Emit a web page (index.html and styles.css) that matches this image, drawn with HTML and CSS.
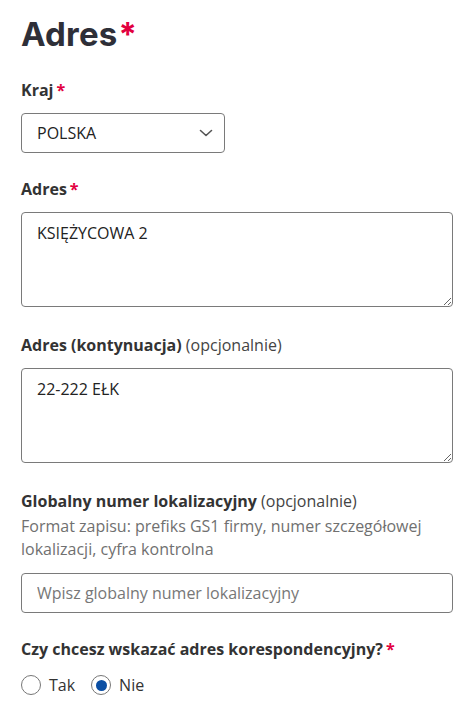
FILE: index.html
```html
<!DOCTYPE html>
<html lang="pl">
<head>
<meta charset="utf-8">
<link rel="stylesheet" href="styles.css">
</head>
<body>
<main class="form">
  <h1 class="title">Adres<span class="req">*</span></h1>

  <div class="field">
    <div class="label">Kraj<span class="req">*</span></div>
    <div class="select">
      <span>POLSKA</span>
      <svg class="chev" width="14" height="8" viewBox="0 0 14 8"><path d="M1.5 1.5 L7 6.5 L12.5 1.5" fill="none" stroke="#555" stroke-width="1.6" stroke-linecap="round" stroke-linejoin="round"/></svg>
    </div>
  </div>

  <div class="field field-area">
    <div class="label">Adres<span class="req">*</span></div>
    <textarea class="area" readonly>KSIĘŻYCOWA 2</textarea>
  </div>

  <div class="field field-area">
    <div class="label">Adres (kontynuacja) <span class="opt">(opcjonalnie)</span></div>
    <textarea class="area" readonly>22-222 EŁK</textarea>
  </div>

  <div class="field">
    <div class="label label-hinted">Globalny numer lokalizacyjny <span class="opt">(opcjonalnie)</span></div>
    <div class="hint">Format zapisu: prefiks GS1 firmy, numer szczegółowej lokalizacji, cyfra kontrolna</div>
    <input class="input" type="text" placeholder="Wpisz globalny numer lokalizacyjny">
  </div>

  <div class="field">
    <div class="label">Czy chcesz wskazać adres korespondencyjny?<span class="req">*</span></div>
    <div class="radios">
      <label class="radio"><span class="dot"></span>Tak</label>
      <label class="radio"><span class="dot on"></span>Nie</label>
    </div>
  </div>
</main>
</body>
</html>
```

FILE: styles.css
```css
* { box-sizing: border-box; }
html, body { margin: 0; padding: 0; background: #fff; }
body {
  font-family: "Open Sans", "Liberation Sans", sans-serif;
  font-size: 16px;
  line-height: 24px;
  color: #222;
}
.form {
  padding: 14px 21px 0 21px;
}
.title {
  font-family: "Inter", "Liberation Sans", sans-serif;
  font-weight: 700;
  font-size: 33px;
  line-height: 40px;
  margin: 0 0 24px 0;
  color: #2e2f38;
  letter-spacing: 0.2px;
}
.title .req { margin-left: 1px; }
.req { color: #e2003f; margin-left: 3px; }
.field { margin-bottom: 24px; }
.field-area { margin-bottom: 26px; }
.label {
  font-weight: 700;
  color: #333;
  margin-bottom: 11px;
}
.label-hinted { margin-bottom: 2px; }
.opt { font-weight: 400; color: #444; }
.hint {
  color: #707070;
  line-height: 23px;
  margin-bottom: 12px;
}
.select {
  width: 204px;
  height: 40px;
  border: 1px solid #7a7a7a;
  border-radius: 4px;
  display: flex;
  align-items: center;
  justify-content: space-between;
  padding: 0 11px 0 15px;
  color: #222;
}
.chev { display: block; }
.area {
  display: block;
  width: 100%;
  height: 95px;
  margin-top: 1px;
  border: 1px solid #7a7a7a;
  border-radius: 4px;
  padding: 8px 15px;
  font-family: "Open Sans", "Liberation Sans", sans-serif;
  font-size: 16px;
  line-height: 24px;
  color: #222;
  resize: vertical;
  outline: none;
}
.input {
  display: block;
  width: 100%;
  height: 40px;
  border: 1px solid #7a7a7a;
  border-radius: 4px;
  padding: 0 15px;
  font-family: "Open Sans", "Liberation Sans", sans-serif;
  font-size: 16px;
  color: #222;
  outline: none;
}
.input::placeholder { color: #777; }
.radios {
  display: flex;
  align-items: center;
  gap: 16px;
  margin-top: 12px;
}
.radio {
  display: flex;
  align-items: center;
  gap: 8px;
  color: #333;
}
.dot {
  width: 20px;
  height: 20px;
  border: 1.5px solid #777;
  border-radius: 50%;
  display: inline-flex;
  align-items: center;
  justify-content: center;
}
.dot.on::after {
  content: "";
  width: 11px;
  height: 11px;
  border-radius: 50%;
  background: #0a4ea3;
}
```
